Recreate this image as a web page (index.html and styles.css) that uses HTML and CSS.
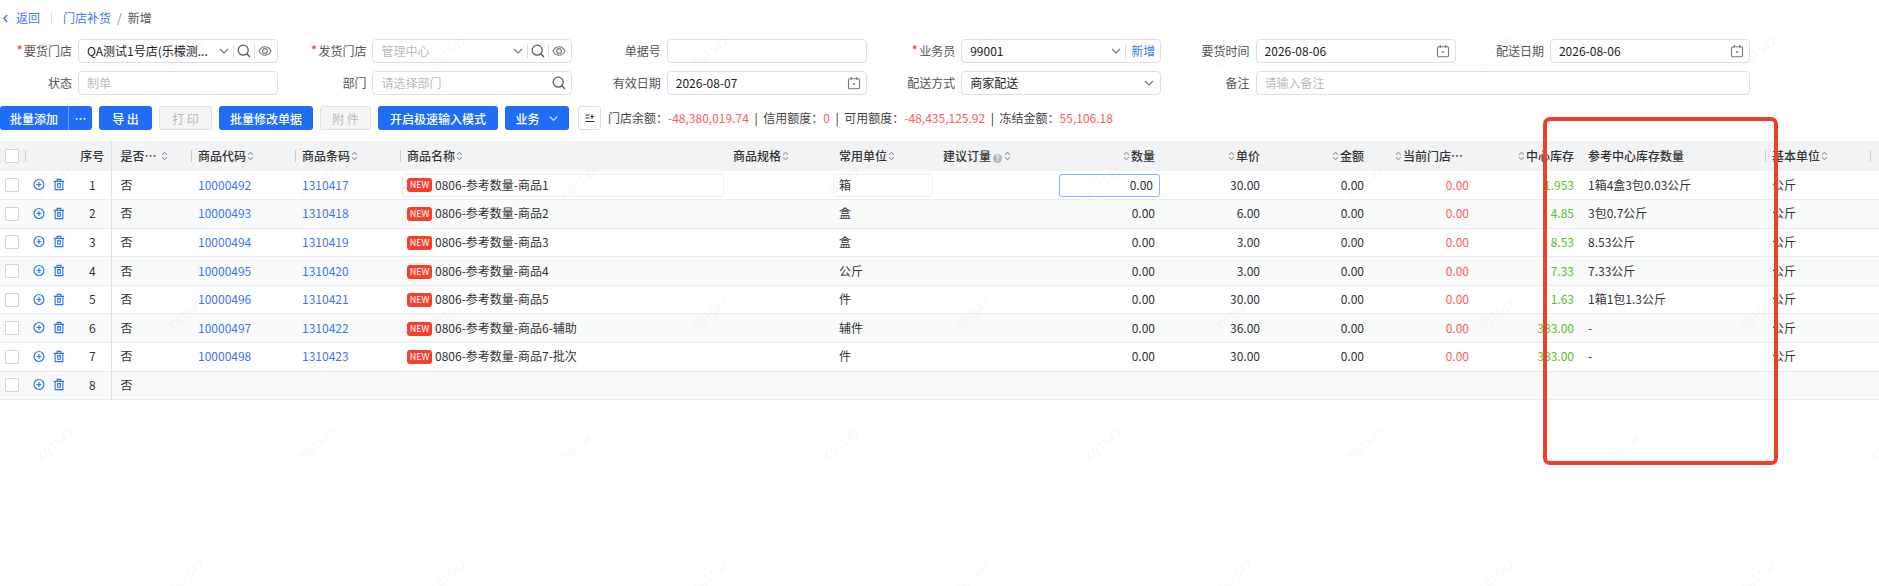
FILE: index.html
```html
<!DOCTYPE html>
<html lang="zh-CN">

<head>
  <meta charset="UTF-8">
  <title>门店补货 - 新增</title>
  <link rel="stylesheet" href="styles.css">
</head>

<body>
  <svg class="defs" width="0" height="0">
    <symbol id="i-sort" viewBox="0 0 8 12"><path d="M1.200 4.600 4 1.800l2.800 2.800M1.200 7.400 4 10.200l2.800-2.800" fill="none" stroke="currentColor" stroke-width="1.200"/></symbol>
    <symbol id="i-down" viewBox="0 0 12 12"><path d="M2 4l4 4 4-4" fill="none" stroke="currentColor" stroke-width="1.200"/></symbol>
    <symbol id="i-search" viewBox="0 0 14 14"><circle cx="6.200" cy="6.200" r="5" fill="none" stroke="currentColor" stroke-width="1.200"/><path d="M9.800 9.800l3.200 3.200" stroke="currentColor" stroke-width="1.300"/></symbol>
    <symbol id="i-eye" viewBox="0 0 14 14"><path d="M1 7c1.500-2.800 3.500-4.200 6-4.200S11.500 4.200 13 7c-1.500 2.800-3.500 4.200-6 4.200S2.500 9.800 1 7z" fill="none" stroke="currentColor" stroke-width="1.100"/><circle cx="7" cy="7" r="2.400" fill="none" stroke="currentColor" stroke-width="1.100"/></symbol>
    <symbol id="i-date" viewBox="0 0 14 14"><rect x="1.500" y="2.800" width="11" height="10" rx="1.200" fill="none" stroke="currentColor" stroke-width="1.100"/><path d="M4.200 1v3M9.800 1v3" stroke="currentColor" stroke-width="1.100"/><path d="M5.800 7.200h2.400v1.400H5.800z" fill="currentColor"/></symbol>
    <symbol id="i-add" viewBox="0 0 14 14"><circle cx="7" cy="7" r="5.800" fill="none" stroke="currentColor" stroke-width="1.300"/><path d="M7 4.200v5.600M4.200 7h5.600" stroke="currentColor" stroke-width="1.300"/></symbol>
    <symbol id="i-del" viewBox="0 0 14 14"><path d="M1 3.300h12M4.800 3.300V1h4.400v2.300M2.500 3.300V13h9V3.300M5.500 6v4.200h3V6z" fill="none" stroke="currentColor" stroke-width="1.300"/></symbol>
  </svg>

  <div class="crumb">
    <svg class="crumb-back" viewBox="0 0 8 12"><path d="M6 2 2 6l4 4" fill="none" stroke="currentColor" stroke-width="1.500"/></svg>
    <a class="back">返回</a>
    <span class="crumb-line"></span>
    <a>门店补货</a>
    <span class="crumb-sep">/</span>
    <span>新增</span>
  </div>

  <div class="form">
    <div class="field">
      <label><i>*</i>要货门店</label>
      <div class="box">
        <span class="val">QA测试1号店(乐檬测...</span>
        <svg class="ic"><use href="#i-down"/></svg>
        <span class="bar"></span>
        <svg class="ic big dark"><use href="#i-search"/></svg>
        <span class="bar"></span>
        <svg class="ic big"><use href="#i-eye"/></svg>
      </div>
    </div>
    <div class="field">
      <label><i>*</i>发货门店</label>
      <div class="box">
        <span class="val ph">管理中心</span>
        <svg class="ic"><use href="#i-down"/></svg>
        <span class="bar"></span>
        <svg class="ic big dark"><use href="#i-search"/></svg>
        <span class="bar"></span>
        <svg class="ic big"><use href="#i-eye"/></svg>
      </div>
    </div>
    <div class="field">
      <label>单据号</label>
      <div class="box"></div>
    </div>
    <div class="field">
      <label><i>*</i>业务员</label>
      <div class="box">
        <span class="val">99001</span>
        <svg class="ic"><use href="#i-down"/></svg>
        <span class="bar"></span>
        <a class="box-link">新增</a>
      </div>
    </div>
    <div class="field">
      <label>要货时间</label>
      <div class="box">
        <span class="val">2026-08-06</span>
        <svg class="ic big"><use href="#i-date"/></svg>
      </div>
    </div>
    <div class="field">
      <label>配送日期</label>
      <div class="box">
        <span class="val">2026-08-06</span>
        <svg class="ic big"><use href="#i-date"/></svg>
      </div>
    </div>

    <div class="field">
      <label>状态</label>
      <div class="box"><span class="val ph">制单</span></div>
    </div>
    <div class="field">
      <label>部门</label>
      <div class="box">
        <span class="val ph">请选择部门</span>
        <svg class="ic big dark"><use href="#i-search"/></svg>
      </div>
    </div>
    <div class="field">
      <label>有效日期</label>
      <div class="box">
        <span class="val">2026-08-07</span>
        <svg class="ic big"><use href="#i-date"/></svg>
      </div>
    </div>
    <div class="field">
      <label>配送方式</label>
      <div class="box">
        <span class="val">商家配送</span>
        <svg class="ic"><use href="#i-down"/></svg>
      </div>
    </div>
    <div class="field wide">
      <label>备注</label>
      <div class="box"><span class="val ph">请输入备注</span></div>
    </div>
  </div>

  <div class="toolbar">
    <div class="btn-group">
      <button class="btn w-add">批量添加</button>
      <button class="btn w-more">…</button>
    </div>
    <button class="btn w-53 spaced">导 出</button>
    <button class="btn w-53 spaced off">打 印</button>
    <button class="btn w-94">批量修改单据</button>
    <button class="btn w-51 spaced off">附 件</button>
    <button class="btn w-120">开启极速输入模式</button>
    <button class="btn w-64">业务<svg class="btn-down"><use href="#i-down"/></svg></button>
    <button class="btn-icon">
      <svg viewBox="0 0 12 12" width="12" height="12"><path d="M1.500 3h4M1.500 6h4M8 2.500v4.500M6.500 4.500H10M1.500 9.500h9" fill="none" stroke="#333" stroke-width="1.100"/></svg>
    </button>
    <div class="summary">
      门店余额：<b>-48,380,019.74</b><s>|</s>信用额度：<b>0</b><s>|</s>可用额度：<b>-48,435,125.92</b><s>|</s>冻结金额：<b>55,106.18</b>
    </div>
  </div>

  <table class="grid">
    <colgroup>
      <col class="c25"><col class="c49"><col class="c37"><col class="c80"><col class="c104"><col class="c105"><col class="c326"><col class="c106"><col class="c104"><col class="c120"><col class="c106"><col class="c105"><col class="c104"><col class="c105"><col class="c105"><col class="c184"><col class="c105"><col class="c9">
    </colgroup>
    <thead>
      <tr>
        <th class="chk"><span class="cb"></span></th>
        <th class="sep"></th>
        <th class="mid">序号</th>
        <th class="frozen-next">是否…<svg class="sort far"><use href="#i-sort"/></svg></th>
        <th class="sep">商品代码<svg class="sort"><use href="#i-sort"/></svg></th>
        <th class="sep">商品条码<svg class="sort"><use href="#i-sort"/></svg></th>
        <th class="sep">商品名称<svg class="sort"><use href="#i-sort"/></svg></th>
        <th>商品规格<svg class="sort"><use href="#i-sort"/></svg></th>
        <th>常用单位<svg class="sort"><use href="#i-sort"/></svg></th>
        <th>建议订量<span class="help">?</span><svg class="sort"><use href="#i-sort"/></svg></th>
        <th class="num"><svg class="sort"><use href="#i-sort"/></svg>数量</th>
        <th class="num"><svg class="sort"><use href="#i-sort"/></svg>单价</th>
        <th class="num"><svg class="sort"><use href="#i-sort"/></svg>金额</th>
        <th class="num cut"><svg class="sort"><use href="#i-sort"/></svg>当前门店…</th>
        <th class="num"><svg class="sort"><use href="#i-sort"/></svg>中心库存</th>
        <th>参考中心库存数量</th>
        <th class="sep">基本单位<svg class="sort"><use href="#i-sort"/></svg></th>
        <th class="sep"></th>
      </tr>
    </thead>
    <tbody>
      <tr>
        <td class="chk"><span class="cb"></span></td>
        <td class="ops"><svg><use href="#i-add"/></svg><svg><use href="#i-del"/></svg></td>
        <td class="mid">1</td>
        <td class="frozen-next">否</td>
        <td class="link">10000492</td>
        <td class="link">1310417</td>
        <td class="has-input"><div class="cell-box name-box"><span class="new">NEW</span>0806-参考数量-商品1</div></td>
        <td></td>
        <td class="has-input"><div class="cell-box unit-box">箱</div></td>
        <td></td>
        <td class="has-input"><div class="cell-box qty-box">0.00</div></td>
        <td class="num">30.00</td>
        <td class="num">0.00</td>
        <td class="num red">0.00</td>
        <td class="num green">1.953</td>
        <td>1箱4盒3包0.03公斤</td>
        <td>公斤</td>
        <td></td>
      </tr>
      <tr>
        <td class="chk"><span class="cb"></span></td>
        <td class="ops"><svg><use href="#i-add"/></svg><svg><use href="#i-del"/></svg></td>
        <td class="mid">2</td>
        <td class="frozen-next">否</td>
        <td class="link">10000493</td>
        <td class="link">1310418</td>
        <td class="name"><span class="new">NEW</span>0806-参考数量-商品2</td>
        <td></td>
        <td>盒</td>
        <td></td>
        <td class="num">0.00</td>
        <td class="num">6.00</td>
        <td class="num">0.00</td>
        <td class="num red">0.00</td>
        <td class="num green">4.85</td>
        <td>3包0.7公斤</td>
        <td>公斤</td>
        <td></td>
      </tr>
      <tr>
        <td class="chk"><span class="cb"></span></td>
        <td class="ops"><svg><use href="#i-add"/></svg><svg><use href="#i-del"/></svg></td>
        <td class="mid">3</td>
        <td class="frozen-next">否</td>
        <td class="link">10000494</td>
        <td class="link">1310419</td>
        <td class="name"><span class="new">NEW</span>0806-参考数量-商品3</td>
        <td></td>
        <td>盒</td>
        <td></td>
        <td class="num">0.00</td>
        <td class="num">3.00</td>
        <td class="num">0.00</td>
        <td class="num red">0.00</td>
        <td class="num green">8.53</td>
        <td>8.53公斤</td>
        <td>公斤</td>
        <td></td>
      </tr>
      <tr>
        <td class="chk"><span class="cb"></span></td>
        <td class="ops"><svg><use href="#i-add"/></svg><svg><use href="#i-del"/></svg></td>
        <td class="mid">4</td>
        <td class="frozen-next">否</td>
        <td class="link">10000495</td>
        <td class="link">1310420</td>
        <td class="name"><span class="new">NEW</span>0806-参考数量-商品4</td>
        <td></td>
        <td>公斤</td>
        <td></td>
        <td class="num">0.00</td>
        <td class="num">3.00</td>
        <td class="num">0.00</td>
        <td class="num red">0.00</td>
        <td class="num green">7.33</td>
        <td>7.33公斤</td>
        <td>公斤</td>
        <td></td>
      </tr>
      <tr>
        <td class="chk"><span class="cb"></span></td>
        <td class="ops"><svg><use href="#i-add"/></svg><svg><use href="#i-del"/></svg></td>
        <td class="mid">5</td>
        <td class="frozen-next">否</td>
        <td class="link">10000496</td>
        <td class="link">1310421</td>
        <td class="name"><span class="new">NEW</span>0806-参考数量-商品5</td>
        <td></td>
        <td>件</td>
        <td></td>
        <td class="num">0.00</td>
        <td class="num">30.00</td>
        <td class="num">0.00</td>
        <td class="num red">0.00</td>
        <td class="num green">1.63</td>
        <td>1箱1包1.3公斤</td>
        <td>公斤</td>
        <td></td>
      </tr>
      <tr>
        <td class="chk"><span class="cb"></span></td>
        <td class="ops"><svg><use href="#i-add"/></svg><svg><use href="#i-del"/></svg></td>
        <td class="mid">6</td>
        <td class="frozen-next">否</td>
        <td class="link">10000497</td>
        <td class="link">1310422</td>
        <td class="name"><span class="new">NEW</span>0806-参考数量-商品6-辅助</td>
        <td></td>
        <td>辅件</td>
        <td></td>
        <td class="num">0.00</td>
        <td class="num">36.00</td>
        <td class="num">0.00</td>
        <td class="num red">0.00</td>
        <td class="num green">383.00</td>
        <td>-</td>
        <td>公斤</td>
        <td></td>
      </tr>
      <tr>
        <td class="chk"><span class="cb"></span></td>
        <td class="ops"><svg><use href="#i-add"/></svg><svg><use href="#i-del"/></svg></td>
        <td class="mid">7</td>
        <td class="frozen-next">否</td>
        <td class="link">10000498</td>
        <td class="link">1310423</td>
        <td class="name"><span class="new">NEW</span>0806-参考数量-商品7-批次</td>
        <td></td>
        <td>件</td>
        <td></td>
        <td class="num">0.00</td>
        <td class="num">30.00</td>
        <td class="num">0.00</td>
        <td class="num red">0.00</td>
        <td class="num green">383.00</td>
        <td>-</td>
        <td>公斤</td>
        <td></td>
      </tr>
      <tr>
        <td class="chk"><span class="cb"></span></td>
        <td class="ops"><svg><use href="#i-add"/></svg><svg><use href="#i-del"/></svg></td>
        <td class="mid">8</td>
        <td class="frozen-next">否</td>
        <td></td><td></td><td></td><td></td><td></td><td></td><td></td><td></td><td></td><td></td><td></td><td></td><td></td><td></td>
      </tr>
    </tbody>
  </table>

  <!-- annotation drawn on the screenshot -->
  <div class="highlight"></div>

  <svg class="watermark" width="1879" height="586">
    <defs>
      <pattern id="wm" width="262" height="262" patternUnits="userSpaceOnUse">
        <text transform="translate(40 198) rotate(-35)">xzj1547</text>
        <text transform="translate(171 68) rotate(-35)">xzj1547</text>
      </pattern>
    </defs>
    <rect width="1879" height="586" fill="url(#wm)"/>
  </svg>
</body>

</html>
```

FILE: styles.css
```css
* {
  box-sizing: border-box;
}

html,
body {
  margin: 0;
  height: 586px;
  overflow: hidden;
  background: white;
}

body {
  position: relative;
  font: 12px/1.4 "Noto Sans CJK SC", "Noto Sans", sans-serif;
  color: #333;
}

.defs {
  display: block;
}

/* breadcrumb */
.crumb {
  display: flex;
  align-items: center;
  height: 36px;
  padding-left: 2px;
  color: #555;
}

.crumb a {
  color: #3b78f0;
}

.crumb-back {
  width: 7px;
  height: 11px;
  margin-right: 7px;
  color: #3b78f0;
}

.crumb-line {
  width: 1px;
  height: 12px;
  margin: 0 11px;
  background: #dde0e4;
}

.crumb-sep {
  margin: 0 6px;
  color: #888;
}

/* form */
.form {
  display: grid;
  grid-template-columns: repeat(6, 278px);
  column-gap: 16.4px;
  row-gap: 8px;
  margin-top: 3px;
}

.field {
  display: flex;
  align-items: center;
}

.field.wide {
  grid-column: span 2;
}

.field label {
  flex: 0 0 72px;
  margin-right: 6px;
  text-align: right;
  color: #555;
  white-space: nowrap;
}

.field label i {
  margin-right: 1px;
  font-size: 14px;
  font-style: normal;
  line-height: 12px;
  color: #f5412b;
}

.box {
  display: flex;
  align-items: center;
  flex: 1;
  min-width: 0;
  height: 24px;
  padding: 0 5px 0 8px;
  background: white;
  border: 1px solid #dcdfe4;
  border-radius: 4px;
}

.val {
  flex: 1;
  min-width: 0;
  margin-right: 6px;
  white-space: nowrap;
  color: #222;
}

.val.ph {
  color: #b9bcc2;
}

.ic {
  flex: none;
  width: 12px;
  height: 12px;
  color: #777;
}

.ic.big {
  width: 14px;
  height: 14px;
}

.ic.dark {
  color: #555;
}

.bar {
  flex: none;
  width: 1px;
  height: 14px;
  margin: 0 3px;
  background: #dcdfe4;
}

.box-link {
  margin-left: 2px;
  color: #3b78f0;
}

/* toolbar */
.toolbar {
  display: flex;
  align-items: center;
  height: 24px;
  margin-top: 11px;
}

.btn-group {
  display: flex;
  margin-right: 7px;
}

.btn {
  display: flex;
  align-items: center;
  justify-content: center;
  height: 24px;
  margin: 0 7px 0 0;
  padding: 0;
  font: 500 12px "Noto Sans CJK SC", sans-serif;
  color: white;
  background: #1f6ef5;
  border: 0;
  border-radius: 3px;
}

.btn-group .btn {
  margin: 0;
}

.w-add {
  width: 68px;
  border-radius: 3px 0 0 3px;
}

.w-more {
  width: 24px;
  border-left: 1px solid #6fa0f8;
  border-radius: 0 3px 3px 0;
}

.w-53 {
  width: 53px;
}

.w-94 {
  width: 94px;
}

.w-51 {
  width: 51px;
}

.w-120 {
  width: 120px;
}

.w-64 {
  width: 64px;
  margin-right: 9px;
}

.btn.off {
  color: #b5b8bd;
  font-weight: 400;
  background: #f5f5f6;
  border: 1px solid #dfe1e4;
}

.btn-down {
  width: 11px;
  height: 11px;
  margin-left: 8px;
}

.btn-icon {
  display: flex;
  align-items: center;
  justify-content: center;
  width: 23px;
  height: 24px;
  padding: 0;
  background: white;
  border: 1px solid #dcdfe4;
  border-radius: 3px;
}

.summary {
  margin-left: 7px;
  color: #444;
  white-space: nowrap;
}

.summary b {
  font-weight: 400;
  color: #ff5c62;
}

.summary s {
  margin: 0 5.6px;
  text-decoration: none;
  color: #222;
}

/* table */
.grid {
  width: 1879px;
  margin-top: 11px;
  table-layout: fixed;
  border-collapse: collapse;
}

.c25 { width: 25px; }
.c49 { width: 49px; }
.c37 { width: 37px; }
.c80 { width: 80px; }
.c104 { width: 104px; }
.c105 { width: 105px; }
.c106 { width: 106px; }
.c120 { width: 120px; }
.c184 { width: 184px; }
.c326 { width: 326px; }
.c9 { width: 9px; }

.grid th,
.grid td {
  padding: 0 7px;
  white-space: nowrap;
  overflow: hidden;
  text-align: left;
}

.grid th {
  height: 30px;
  font-weight: 500;
  background-color: #f2f3f5;
}

.grid th.sep {
  background-image: linear-gradient(#c9ccd1, #c9ccd1);
  background-repeat: no-repeat;
  background-position: left center;
  background-size: 1px 12px;
}

.grid td {
  height: 28.6px;
  border-bottom: 1px solid #e9ebee;
}

.grid tbody tr:nth-child(even) td {
  background: #f9fafa;
}

.grid .chk {
  padding: 0 0 0 5px;
}

.cb {
  display: block;
  width: 14px;
  height: 14px;
  background: white;
  border: 1px solid #d3d5d9;
  border-radius: 1px;
}

.grid .ops {
  padding: 0 0 4px 8px;
  color: #2a72f0;
}

.ops svg {
  display: inline-block;
  width: 12px;
  height: 13px;
  margin-right: 8px;
  vertical-align: middle;
}

.grid .mid {
  padding: 0;
  text-align: center;
  border-right: 1px solid #dcdfe3;
}

.grid .frozen-next {
  padding-left: 9px;
}

.sort {
  width: 7px;
  height: 12px;
  margin: 0 1px;
  color: #9da1a8;
  vertical-align: -1px;
}

.sort.far {
  margin-left: 4px;
}

.help {
  display: inline-block;
  width: 9px;
  height: 9px;
  margin: 0 1px 0 2px;
  font-size: 7px;
  line-height: 9px;
  text-align: center;
  color: white;
  background: #b6bac1;
  border-radius: 50%;
  vertical-align: 0;
}

.grid .num {
  text-align: right;
}

.grid th.cut {
  padding-right: 13px;
}

.link {
  color: #3b78f0;
}

.red {
  color: #ff5c62;
}

.green {
  color: #52c41a;
}

.grid .has-input {
  padding: 0 2px;
}

.cell-box {
  display: flex;
  align-items: center;
  height: 23px;
  background: white;
  border: 1px solid #eceef0;
  border-radius: 3px;
}

.name-box {
  padding-left: 4px;
}

.unit-box {
  width: 100px;
  margin-left: -1px;
  padding-left: 5px;
}

.qty-box {
  justify-content: flex-end;
  width: 101px;
  margin-left: 1px;
  padding-right: 6px;
  border: 1px solid #8db4f7;
}

.new {
  display: inline-block;
  flex: none;
  width: 25px;
  height: 14px;
  margin-right: 3px;
  font-size: 9px;
  line-height: 14px;
  text-align: center;
  color: white;
  background: #f5412b;
  border-radius: 3px;
  vertical-align: 1px;
}

/* red box over the screenshot */
.highlight {
  position: absolute;
  left: 1543px;
  top: 117px;
  width: 235px;
  height: 348px;
  border: 4px solid #ee4027;
  border-radius: 7px;
  pointer-events: none;
}

.watermark {
  position: absolute;
  left: 0;
  top: 0;
  pointer-events: none;
}

.watermark text {
  font: 12px "Noto Sans", sans-serif;
  fill: rgba(0, 0, 0, 0.03);
}
```
